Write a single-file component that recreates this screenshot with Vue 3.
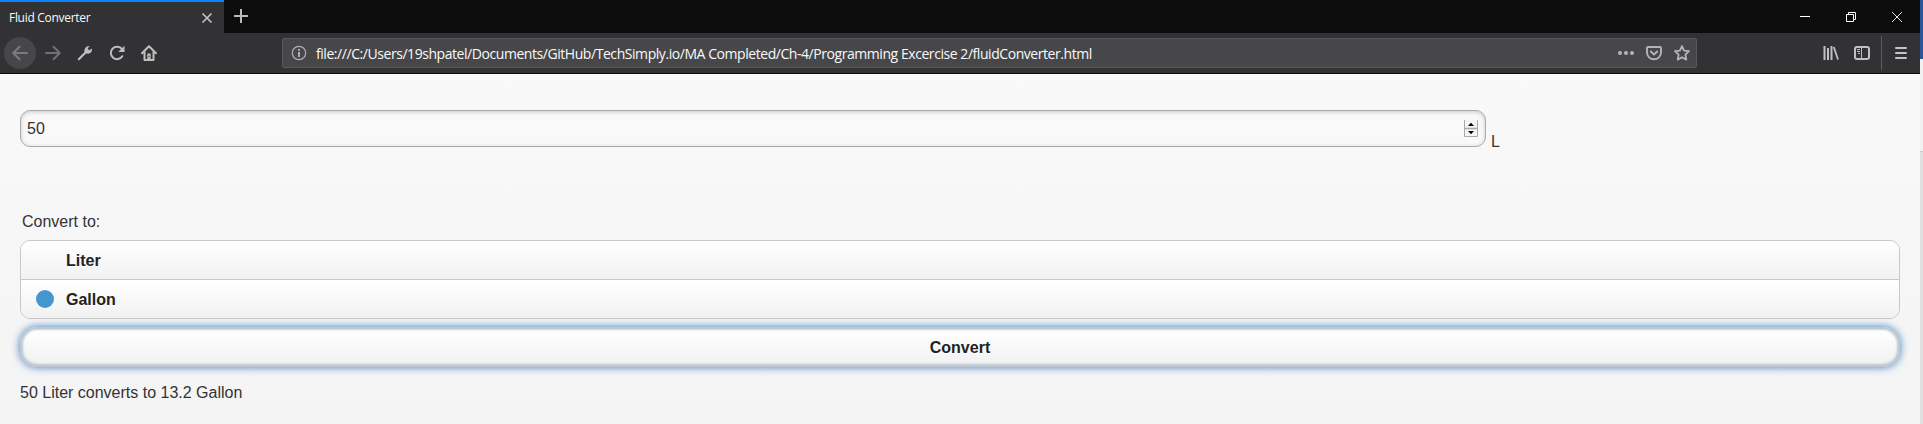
<script setup>
const units = [
  { name: 'Liter', on: false },
  { name: 'Gallon', on: true },
]
</script>

<template>
  <div class="screen">
    <div class="window">
      <header class="tabs">
        <div class="tab">
          <span class="title">Fluid Converter</span>
          <svg class="close" width="12" height="12" viewBox="0 0 12 12"><path d="M1.500 1.500l9 9M10.500 1.500l-9 9" stroke="#c4c4c5" stroke-width="1.600" /></svg>
        </div>
        <svg class="plus" width="14" height="14" viewBox="0 0 14 14"><path d="M7 0v14M0 7h14" stroke="#b9b9ba" stroke-width="2" /></svg>
        <div class="controls">
          <svg width="46" height="33" viewBox="0 0 46 33"><path d="M18 16.500h10" stroke="#fff" /></svg>
          <svg width="46" height="33" viewBox="0 0 46 33"><path d="M18.500 14.500h7v7h-7zM20.500 14v-1.500h7v7H26" fill="none" stroke="#fff" /></svg>
          <svg width="46" height="33" viewBox="0 0 46 33"><path d="M18 12l10 10M28 12l-10 10" stroke="#fff" stroke-width=".9" /></svg>
        </div>
      </header>

      <nav class="toolbar">
        <div class="nav">
          <span class="back"><svg width="16" height="16" viewBox="0 0 16 16"><path d="M15 8H1.500M7.500 1.800L1.300 8l6.200 6.200" fill="none" stroke="#7b7b7d" stroke-width="2" stroke-linecap="round" stroke-linejoin="round" /></svg></span>
          <svg width="16" height="16" viewBox="0 0 16 16"><path d="M1 8h13.500M8.500 1.800L14.700 8l-6.200 6.200" fill="none" stroke="#717173" stroke-width="2" stroke-linecap="round" stroke-linejoin="round" /></svg>
          <svg width="16" height="16" viewBox="0 0 16 16"><path d="M1.800 14.200L9 7" stroke="#bebebf" stroke-width="2.200" stroke-linecap="round" /><path d="M12.600 1L10.600 3.800l1.600 1.500L15 3.500c.3 3-1.300 5.200-4 5.200-1 0-1.800-.1-2.500-.7-1-.9-1.300-2-1-3.300C8 2.300 10 .8 12.600 1z" fill="#bebebf" /></svg>
          <svg width="16" height="16" viewBox="0 0 16 16"><path d="M13.300 11.200A6.200 6.200 0 1 1 13 4.200" fill="none" stroke="#bebebf" stroke-width="2" stroke-linecap="round" /><path d="M15.500.7v6.200H9.300z" fill="#bebebf" /></svg>
          <svg width="16" height="16" viewBox="0 0 16 16"><path d="M1 8.300L8 1.300l7 7M3.500 7v8h9V7" fill="none" stroke="#bebebf" stroke-width="2" stroke-linecap="round" stroke-linejoin="round" /><path d="M6.300 15V8.500h3.400V15z" fill="#bebebf" /><path d="M8 10.800v1.400" stroke="#323234" /></svg>
        </div>
        <div class="urlbar">
          <svg width="16" height="16" viewBox="0 0 16 16"><circle cx="8" cy="8" r="6.700" fill="none" stroke="#b0b0b1" stroke-width="1.200" /><path d="M8 7v5M8 4v1.800" stroke="#b0b0b1" stroke-width="2" /></svg>
          <span class="url">file:///C:/Users/19shpatel/Documents/GitHub/TechSimply.io/MA Completed/Ch-4/Programming Excercise 2/fluidConverter.html</span>
          <div class="actions">
            <svg width="16" height="16" viewBox="0 0 16 16" fill="#b4b4b5"><circle cx="2" cy="8" r="2" /><circle cx="8" cy="8" r="2" /><circle cx="14" cy="8" r="2" /></svg>
            <svg width="16" height="16" viewBox="0 0 16 16" fill="none" stroke="#b4b4b5" stroke-width="1.900" stroke-linecap="round" stroke-linejoin="round"><path d="M2 2h12q1 0 1 1v4.500a7 6.800 0 0 1-14 0V3q0-1 1-1z" /><path d="M4.800 6.500L8 9.500l3.200-3" /></svg>
            <svg width="16" height="16" viewBox="0 0 16 16"><path d="M8 1l2.100 4.600 4.900.6-3.600 3.400.9 5L8 12.200l-4.300 2.400.9-5L1 6.200l4.900-.6z" fill="none" stroke="#b4b4b5" stroke-width="1.800" stroke-linejoin="round" /></svg>
          </div>
        </div>
        <div class="extras">
          <svg width="16" height="16" viewBox="0 0 16 16"><path d="M1.500 1v14M5 3v12M8.500 1v14" stroke="#c0c0c1" stroke-width="2" /><path d="M10.800 2l4.200 12.500" stroke="#c0c0c1" stroke-width="1.800" /></svg>
          <svg width="16" height="16" viewBox="0 0 16 16"><rect x="1" y="2" width="14" height="12" rx="2" fill="none" stroke="#c0c0c1" stroke-width="2" /><path d="M7.500 2v12M3 4.500h3M3 6.500h3M4 8.500h2" stroke="#c0c0c1" /></svg>
          <i class="rule"></i>
          <svg width="14" height="16" viewBox="0 0 14 16"><path d="M2 3h10M2 8h10M2 13h10" stroke="#c4c4c5" stroke-width="2" stroke-linecap="round" /></svg>
        </div>
      </nav>

      <main class="page">
        <div class="amount">
          <div class="field">
            <span>50</span>
            <svg width="14" height="17" viewBox="0 0 14 17"><path d="M.5 0v16.500h13V0M0 8.500h14" fill="#f4f4f4" stroke="#aaa" /><path d="M0 8.500h14" stroke="#aaa" stroke-width="1.500" /><path d="M4 6h6L7 2.700zM4 11h6l-3 3.300z" fill="#000" /></svg>
          </div>
          <span class="unit">L</span>
        </div>
        <div class="legend">Convert to:</div>
        <div class="choices">
          <div v-for="u in units" :key="u.name" class="choice">
            <i class="dot" :class="{ on: u.on }"></i>{{ u.name }}
          </div>
        </div>
        <div class="submit">Convert</div>
        <p class="result">50 Liter converts to 13.2 Gallon</p>
      </main>
    </div>
    <aside class="edge"><i class="blue"></i><i class="pale"></i></aside>
  </div>
</template>

<style>
body { overflow: hidden; }
</style>

<style scoped>
.screen { display: flex; width: 1923px; height: 424px; overflow: hidden; }
.screen * { box-sizing: border-box; }
svg { display: block; flex: none; }
.window { width: 1920px; display: flex; flex-direction: column; }
.tabs { height: 33px; background: #0c0c0c; display: flex; align-items: center; }
.tab { width: 224px; height: 33px; border-top: 2px solid #0a84ff; background: #323234; display: flex; align-items: center; justify-content: space-between; padding: 0 11px 0 9px; }
.title { font: 12px/16px "Open Sans", "Noto Sans", sans-serif; letter-spacing: -.3px; color: #f9f9fa; white-space: nowrap; }
.plus { margin: -1px 0 0 10px; }
.controls { margin-left: auto; display: flex; }
.toolbar { height: 41px; background: #323234; border-bottom: 1px solid #0c0c0d; display: flex; align-items: center; }
.nav { display: flex; align-items: center; gap: 16px; padding-left: 4px; width: 282px; }
.nav .back { margin-right: -7px; }
.back { width: 32px; height: 32px; border-radius: 50%; background: #474749; display: grid; place-items: center; }
.urlbar { width: 1415px; height: 30px; background: #474749; border: 1px solid #59595b; border-radius: 2px; display: flex; align-items: center; padding: 0 6px 0 8px; }
.url { margin-left: 9px; padding-top: 2px; font: 14px/20px "Open Sans", "Noto Sans", sans-serif; letter-spacing: -.442px; color: #f9f9fa; white-space: nowrap; }
.actions { margin-left: auto; display: flex; gap: 12px; }
.extras { display: flex; align-items: center; margin-left: 126px; }
.extras svg + svg { margin-left: 15px; }
.rule { width: 1px; height: 34px; background: #5c5c5e; margin: 0 12px 0 11px; }
.page { flex: 1; padding: 36px 20px 0; background: linear-gradient(#f9f9f9, #f4f4f4); font: 16px/21px "Liberation Sans", Arial, sans-serif; color: #333; }
.amount { display: flex; align-items: flex-end; height: 37px; }
.field { width: 1466px; height: 37px; border: 1px solid #aaa; border-radius: 10px; background: #f9f9f9; box-shadow: inset 0 1px 4px rgba(0, 0, 0, .2); display: flex; align-items: center; justify-content: space-between; padding: 0 7px 0 6px; }
.unit { margin-left: 5px; line-height: 18px; margin-bottom: -4px; }
.legend { margin: 64px 0 0 2px; height: 29px; }
.choices { border: 1px solid #c8c8c8; border-radius: 10px; overflow: hidden; height: 79px; }
.choice { height: 38px; display: flex; align-items: center; padding-left: 15px; background: linear-gradient(#fff, #f1f1f1); color: #222; font-weight: 700; text-shadow: 0 1px 0 #fff; }
.choice + .choice { border-top: 1px solid #c8c8c8; height: 39px; }
.dot { width: 18px; height: 18px; border-radius: 50%; margin-right: 12px; box-shadow: 0 1px 0 rgba(255, 255, 255, .4); }
.dot.on { background: #4596ce; }
.submit { margin-top: 8px; height: 40px; border: 2px solid #c3c6ca; border-radius: 17px; background: linear-gradient(#fff, #f1f1f1); box-shadow: inset 0 0 3px rgba(56, 123, 190, .7), 0 0 9px #387bbe; display: flex; align-items: center; justify-content: center; color: #222; font-weight: 700; text-shadow: 0 1px 0 #fff; }
.result { margin: 15px 0 0; }
.edge { width: 3px; background: #e0e0e0; display: flex; flex-direction: column; }
.blue { height: 59px; background: #2b579a; }
.pale { height: 93px; background: #f1f1f1; border-bottom: 1px solid #ccc; }
</style>
